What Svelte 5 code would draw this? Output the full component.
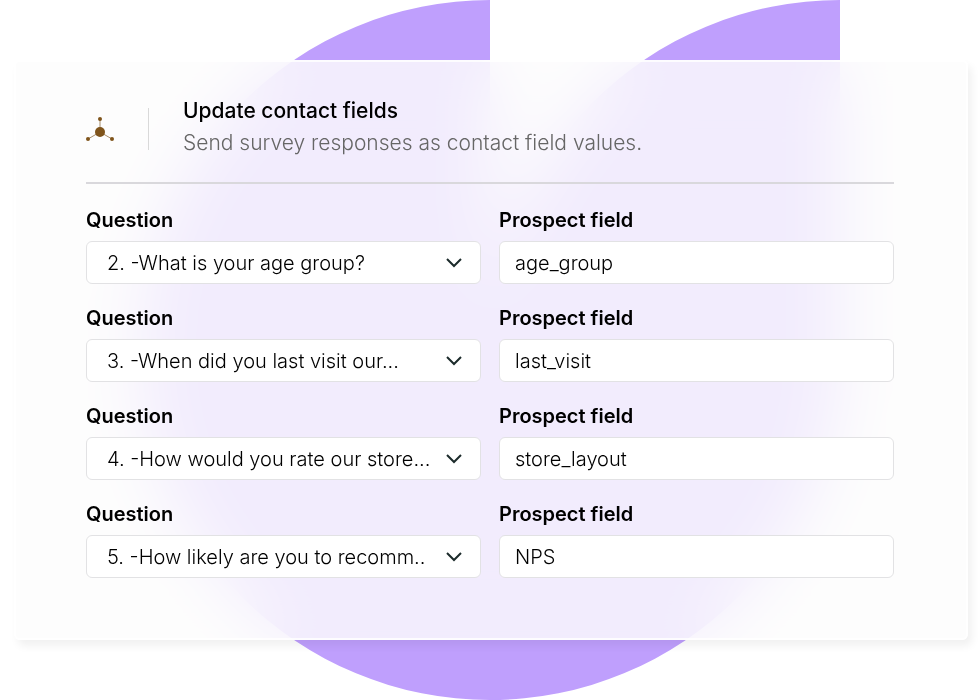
<script lang="ts">
	type Mapping = {
		id: number;
		question: string;
		field: string;
	};

	let mappings = $state<Mapping[]>([
		{ id: 2, question: '2. -What is your age group?', field: 'age_group' },
		{ id: 3, question: '3. -When did you last visit our...', field: 'last_visit' },
		{ id: 4, question: '4. -How would you rate our store...', field: 'store_layout' },
		{ id: 5, question: '5. -How likely are you to recomm..', field: 'NPS' }
	]);

	const questions = mappings.map((m) => m.question);
</script>

<main class="stage">
	<svg class="backdrop" viewBox="0 0 700 700" aria-hidden="true">
		<path
			d="M350 0A350 350 0 0 0 0 350A350 350 0 0 0 350 700A350 350 0 0 0 700 350V0A350 350 0 0 0 350 350Z"
			fill="#bf9ffd"
		/>
	</svg>

	<section class="card">
		<header>
			<svg class="logo" viewBox="0 0 28 28" aria-hidden="true">
				<path d="M14 4V17M2 24L14 17L26 24" fill="none" stroke="#a58c6b" />
				<g fill="#7f541b">
					<circle cx="14" cy="17" r="5" />
					<circle cx="14" cy="4" r="2" />
					<circle cx="2" cy="24" r="2" />
					<circle cx="26" cy="24" r="2" />
				</g>
			</svg>
			<div class="heading">
				<h1>Update contact fields</h1>
				<p>Send survey responses as contact field values.</p>
			</div>
		</header>

		<form>
			{#each mappings as mapping (mapping.id)}
				<div class="row">
					<div class="cell">
						<label for="question-{mapping.id}">Question</label>
						<div class="select">
							<select id="question-{mapping.id}" bind:value={mapping.question}>
								{#each questions as question}
									<option value={question}>{question}</option>
								{/each}
							</select>
							<svg class="chevron" viewBox="0 0 18 12" aria-hidden="true">
								<path d="M2 2L9 9L16 2" fill="none" stroke="#1c2b2b" stroke-width="2" />
							</svg>
						</div>
					</div>
					<div class="cell">
						<label for="field-{mapping.id}">Prospect field</label>
						<input id="field-{mapping.id}" type="text" bind:value={mapping.field} />
					</div>
				</div>
			{/each}
		</form>
	</section>
</main>

<style>
	:global(body) {
		background: #fff;
	}

	.stage {
		position: relative;
		box-sizing: border-box;
		min-height: 100vh;
		padding: 60px 12px 60px 14px;
		font-family: Inter, 'Liberation Sans', sans-serif;
		color: #000;
	}

	.backdrop {
		position: absolute;
		inset: 0;
		width: 100%;
		height: 100%;
	}

	.card {
		position: relative;
		box-sizing: border-box;
		padding: 35px 72px 60px 70px;
		border: 2px solid rgba(255, 255, 255, 0.8);
		border-radius: 6px;
		background: rgba(253, 253, 253, 0.82);
		backdrop-filter: blur(34px);
		box-shadow: 4px 6px 8px rgba(0, 0, 0, 0.06);
	}

	header {
		display: flex;
		align-items: center;
		padding-bottom: 21px;
		border-bottom: 2px solid #d9d8dc;
	}

	.logo {
		flex-shrink: 0;
		width: 28px;
		height: 28px;
		margin-right: 34px;
	}

	.heading {
		position: relative;
		padding-left: 35px;
	}

	.heading::before {
		content: '';
		position: absolute;
		left: 0;
		top: 11px;
		bottom: 11px;
		width: 1px;
		background: #d9d9d9;
	}

	h1 {
		margin: 0;
		font-size: 21px;
		font-weight: 500;
		line-height: 28px;
	}

	p {
		margin: 0;
		font-size: 21px;
		font-weight: 300;
		line-height: 36px;
		color: #666;
	}

	form {
		display: grid;
		gap: 18px;
		padding-top: 20px;
	}

	.row {
		display: grid;
		grid-template-columns: 1fr 1fr;
		gap: 18px;
	}

	.cell {
		min-width: 0;
	}

	label {
		display: block;
		margin-bottom: 4px;
		font-size: 20px;
		font-weight: 600;
		line-height: 33px;
	}

	.select {
		position: relative;
	}

	select,
	input {
		display: block;
		box-sizing: border-box;
		width: 100%;
		height: 43px;
		margin: 0;
		padding: 0 15px;
		border: 1px solid #e2e2e4;
		border-radius: 6px;
		background: #fff;
		font: inherit;
		font-size: 20px;
		font-weight: 300;
		color: inherit;
	}

	select {
		appearance: none;
		padding: 0 44px 0 20px;
	}

	.chevron {
		position: absolute;
		right: 18px;
		top: 16px;
		width: 18px;
		height: 12px;
		pointer-events: none;
	}
</style>
